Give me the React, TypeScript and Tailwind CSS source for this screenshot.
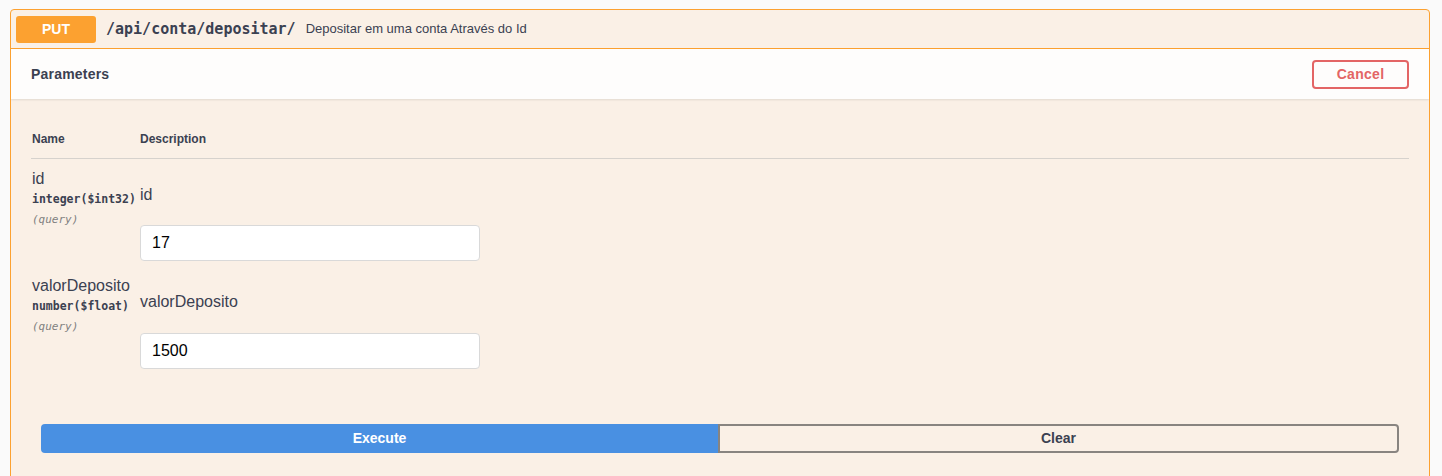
export default function App() {
  const sans = "font-['Liberation_Sans',Arial,sans-serif]";
  const mono = "font-['DejaVu_Sans_Mono','Liberation_Mono',monospace]";

  return (
    <div className={`min-h-screen bg-[#fafafa] pt-[9px] pl-[10px] pr-[12px] ${sans}`}>
      <div className="w-[1420px] border border-[#fca130] rounded-[4px] bg-[#faf0e6] text-[#3b4151] overflow-hidden">
        {/* cabecera del endpoint */}
        <div className="flex items-center h-[39px] px-[5px] border-b border-[#fca130]">
          <span className="w-[80px] h-[27px] flex items-center justify-center rounded-[3px] bg-[#fca130] text-white text-[14px] font-bold">
            PUT
          </span>
          <span className={`ml-[10px] text-[15px] font-bold ${mono}`}>/api/conta/depositar/</span>
          <span className="ml-[10px] text-[13px]">Depositar em uma conta Através do Id</span>
        </div>

        {/* barra de Parameters */}
        <div className="flex items-center justify-between h-[50px] pl-[20px] pr-[20px] bg-[#fefdfc] shadow-[0_1px_2px_rgba(0,0,0,0.1)]">
          <h4 className="text-[14px] font-bold tracking-[0.2px]">Parameters</h4>
          <button className="w-[97px] h-[29px] border-2 border-[#e36565] rounded-[4px] text-[#e36565] text-[14px] font-bold bg-transparent tracking-[0.3px]">
            Cancel
          </button>
        </div>

        {/* tabla */}
        <div className="px-[20px] pt-[32px]">
          <div className="flex pb-[11px] leading-[16px] border-b border-[#d6d2cd] text-[12px] font-bold">
            <div className="w-[109px] pl-[1px]">Name</div>
            <div>Description</div>
          </div>

          <ParamRow
            name="id"
            type="integer($int32)"
            descTop="mt-[16px]"
            inputTop="mt-[20px]"
            value="17"
            rowPad="pt-[10px] pb-[15px]"
          />
          <ParamRow
            name="valorDeposito"
            type="number($float)"
            descTop="mt-[16px]"
            inputTop="mt-[21px]"
            value="1500"
            rowPad="pt-0 pb-0"
          />
        </div>

        {/* botones */}
        <div className="flex px-[30px] pt-[55px] pb-[30px]">
          <button className="flex-1 h-[29px] bg-[#4990e2] text-white text-[14px] font-bold rounded-l-[4px]">
            Execute
          </button>
          <button className="flex-1 h-[29px] border-2 border-[#888480] rounded-r-[4px] text-[#3b4151] text-[14px] font-bold bg-transparent">
            Clear
          </button>
        </div>
      </div>
    </div>
  );
}

interface RowProps {
  name: string;
  type: string;
  descTop: string;
  inputTop: string;
  value: string;
  rowPad: string;
}

function ParamRow({ name, type, descTop, inputTop, value, rowPad }: RowProps) {
  const mono = "font-['DejaVu_Sans_Mono','Liberation_Mono',monospace]";
  return (
    <div className={`flex ${rowPad}`}>
      <div className="w-[109px] pl-[1px]">
        <div className="text-[16px] leading-[20px]">{name}</div>
        <div className={`text-[11.5px] leading-[21px] font-bold whitespace-nowrap ${mono}`}>{type}</div>
        <div className={`mt-[1px] text-[11px] leading-[18px] italic text-[#808080] ${mono}`}>(query)</div>
      </div>
      <div>
        <div className={`text-[16px] leading-[20px] text-[#3b4151] ${descTop}`}>{name}</div>
        <input
          readOnly
          value={value}
          className={`block w-[340px] h-[36px] px-[11px] bg-white border border-[#d9d9d9] rounded-[4px] text-[16px] text-black outline-none ${inputTop}`}
        />
      </div>
    </div>
  );
}
